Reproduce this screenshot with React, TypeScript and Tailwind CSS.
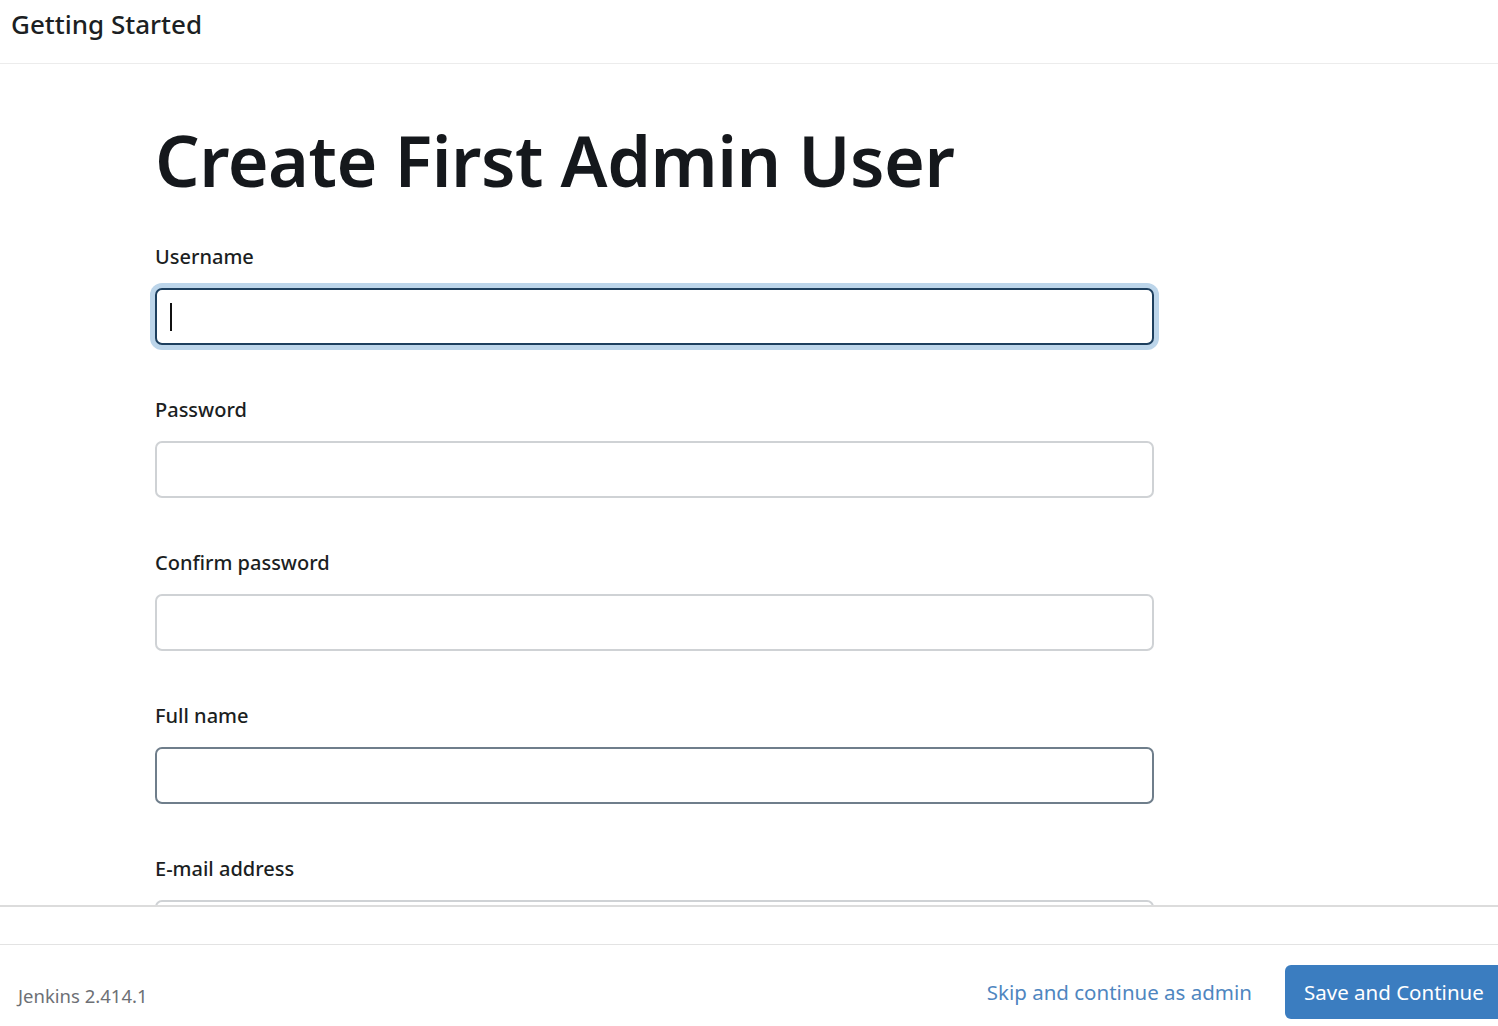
import React from "react";

const font = { fontFamily: '"Noto Sans", "Open Sans", sans-serif' };

function Field({ label, variant }: { label: string; variant: "focus" | "normal" | "hover" }) {
  const cls =
    variant === "focus"
      ? "border-2 border-[#1d3f5e] shadow-[0_0_0_5px_#bcd5ea]"
      : variant === "hover"
      ? "border-2 border-[#6f7e8b]"
      : "border-2 border-[#cfd2d5]";
  return (
    <div className="flex flex-col">
      <label className="text-[20px] leading-[28px] text-[#1b1e22] font-medium">{label}</label>
      <div className={`mt-[17px] h-[57px] w-[999px] shrink-0 rounded-[7px] bg-white flex items-center pl-[13px] ${cls}`}>
        {variant === "focus" && <div className="w-[2px] h-[28px] bg-[#111]" />}
      </div>
    </div>
  );
}

export default function App() {
  return (
    <div className="w-[1498px] h-[1026px] bg-white flex flex-col overflow-hidden" style={font}>
      <div className="h-[64px] shrink-0 border-b border-[#ececec] flex items-start pl-[11px] pt-[6px]">
        <span className="text-[26px] leading-[36px] text-[#1c1f23] font-medium">Getting Started</span>
      </div>
      <div className="h-[843px] shrink-0 overflow-hidden border-b-2 border-[#dcdcdc] pl-[155px]">
        <h1 className="mt-[53px] text-[70px] leading-[86px] font-semibold text-[#15181c] tracking-[-0.5px]">Create First Admin User</h1>
        <div className="mt-[40px] flex flex-col gap-[51px]">
          <Field label="Username" variant="focus" />
          <Field label="Password" variant="normal" />
          <Field label="Confirm password" variant="normal" />
          <Field label="Full name" variant="hover" />
          <Field label="E-mail address" variant="normal" />
        </div>
      </div>
      <div className="h-[38px] shrink-0 border-b border-[#e3e3e3]" />
      <div className="flex-1 flex items-start pl-[18px] pt-[20px] overflow-hidden">
        <span className="text-[18.5px] leading-[26px] text-[#6d7075] mt-[18px]">Jenkins 2.414.1</span>
        <div className="ml-auto flex items-center gap-[33px] mr-[-20px]">
          <span className="text-[20.5px] text-[#4f86bf]">Skip and continue as admin</span>
          <button className="h-[54px] w-[233px] pl-[19px] text-left rounded-[6px] bg-[#3b7dc0] text-white text-[20.5px] whitespace-nowrap">Save and Continue</button>
        </div>
      </div>
    </div>
  );
}
